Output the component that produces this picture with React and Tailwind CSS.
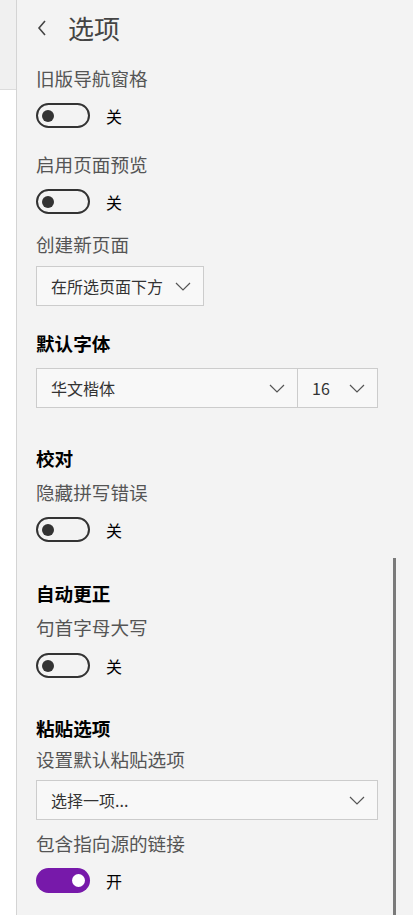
import React from "react";

function Chevron({ className = "" }) {
  return (
    <svg width="16" height="9" viewBox="0 0 16 9" className={className} fill="none">
      <path d="M1 1 L8 8 L15 1" stroke="#555" strokeWidth="1.2" />
    </svg>
  );
}

function Toggle({ on = false }) {
  return (
    <div className="flex items-center h-[25px]">
      {on ? (
        <div className="w-[54px] h-[25px] rounded-full bg-[#7719aa] flex items-center justify-end pr-[5px]">
          <div className="w-[13px] h-[13px] rounded-full bg-white" />
        </div>
      ) : (
        <div className="w-[54px] h-[25px] rounded-full border-2 border-[#333] flex items-center pl-[4px]">
          <div className="w-[12px] h-[12px] rounded-full bg-[#333]" />
        </div>
      )}
      <span className="ml-[16px] text-[16px] text-black leading-none">{on ? "开" : "关"}</span>
    </div>
  );
}

function Label({ children, className = "" }) {
  return (
    <div className={`h-[24px] flex items-center text-[18.6px] text-[#555] leading-none whitespace-nowrap ${className}`}>
      {children}
    </div>
  );
}

function Heading({ children, className = "" }) {
  return (
    <div className={`h-[24px] flex items-center text-[18.6px] font-bold text-black leading-none ${className}`}>
      {children}
    </div>
  );
}

function Select({ text, className = "" }) {
  return (
    <div className={`h-[40px] border border-[#cccccc] bg-[#f8f8f8] flex items-center justify-between pl-[14px] pr-[12px] ${className}`}>
      <span className="text-[16px] text-[#333] leading-none whitespace-nowrap">{text}</span>
      <Chevron />
    </div>
  );
}

export default function App() {
  return (
    <div className="h-screen w-full flex font-['Noto_Sans_CJK_SC',sans-serif] overflow-hidden">
      <div className="w-[17px] shrink-0 border-r border-[#d4d4d4] flex flex-col bg-white">
        <div className="h-[90px] bg-[#f0f0f0] border-b border-[#dcdcdc]" />
      </div>
      <div className="flex-1 bg-[#f3f3f3] relative pl-[19px]">
        <div className="h-[56px] flex items-center">
          <svg width="10" height="16" viewBox="0 0 10 16" className="ml-[1px]" fill="none">
            <path d="M8 1 L2 8 L8 15" stroke="#444" strokeWidth="1.6" />
          </svg>
          <span className="ml-[21px] text-[26px] text-[#444] leading-none">选项</span>
        </div>
        <Label className="mt-[10px]">旧版导航窗格</Label>
        <div className="mt-[13px]"><Toggle /></div>
        <Label className="mt-[24px]">启用页面预览</Label>
        <div className="mt-[13px]"><Toggle /></div>
        <Label className="mt-[18px]">创建新页面</Label>
        <Select text="在所选页面下方" className="mt-[10px] w-[168px]" />
        <Heading className="mt-[25px]">默认字体</Heading>
        <div className="mt-[13px] flex w-[342px]">
          <Select text="华文楷体" className="w-[262px]" />
          <Select text="16" className="w-[80px] border-l-0" />
        </div>
        <Heading className="mt-[38px]">校对</Heading>
        <Label className="mt-[10px]">隐藏拼写错误</Label>
        <div className="mt-[13px]"><Toggle /></div>
        <Heading className="mt-[39px]">自动更正</Heading>
        <Label className="mt-[10px]">句首字母大写</Label>
        <div className="mt-[14px]"><Toggle /></div>
        <Heading className="mt-[38px]">粘贴选项</Heading>
        <Label className="mt-[7px]">设置默认粘贴选项</Label>
        <Select text="选择一项..." className="mt-[9px] w-[342px]" />
        <Label className="mt-[11px]">包含指向源的链接</Label>
        <div className="mt-[13px]"><Toggle on /></div>
        <div className="absolute left-[376px] top-[558px] bottom-0 w-[3px] bg-[#7a7a7a]" />
      </div>
    </div>
  );
}
